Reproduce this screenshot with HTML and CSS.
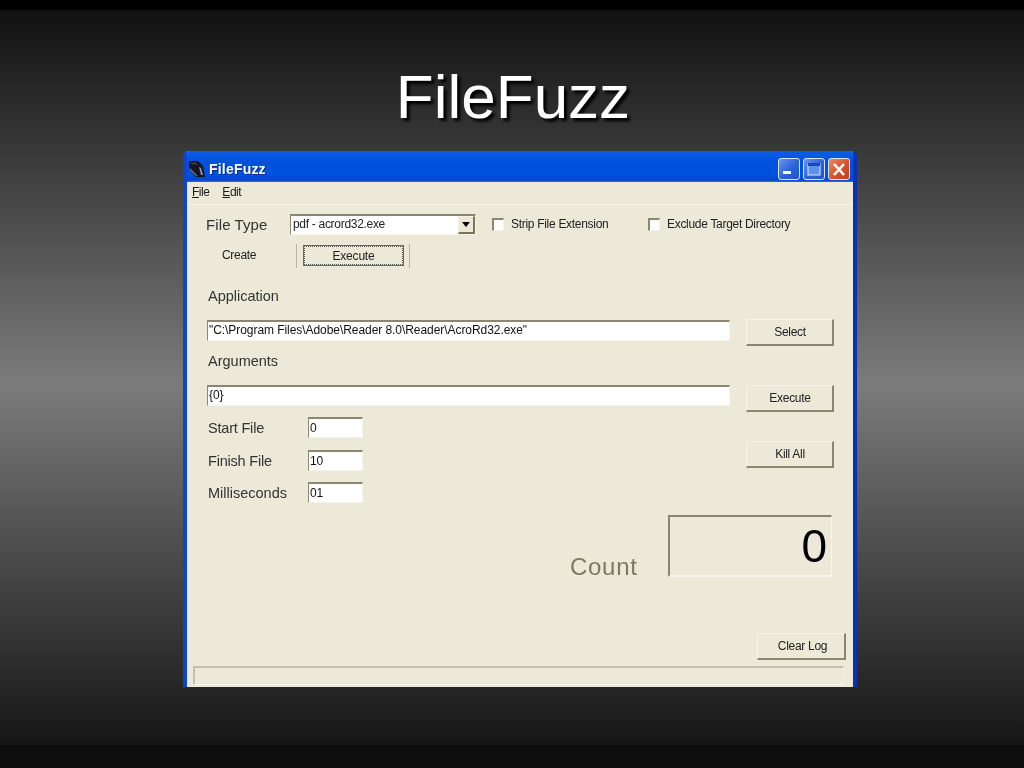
FILE: index.html
```html
<!DOCTYPE html>
<html lang="en">
<head>
<meta charset="utf-8">
<title>FileFuzz</title>
<link rel="stylesheet" href="styles.css">
</head>
<body>
<main class="slide">
  <h1 class="slide-title">FileFuzz</h1>
  <section class="window">
    <header class="titlebar">
      <svg class="app-icon" width="16" height="16" viewBox="0 0 16 16"><path d="M0 0h9l5 5 2 11H7L0 9z" fill="#14161f"/><path d="M1 1h6l2 3H3z" fill="#2c3040"/><path d="M10 6l2 1 2 7h-2z" fill="#8a98b0"/><path d="M0 9l7 6h2L1 7z" fill="#5c6880"/></svg>
      <span class="title-text">FileFuzz</span>
      <div class="caption-buttons">
        <span class="cap cap-blue"><svg width="22" height="22" viewBox="0 0 22 22"><rect x="5" y="13" width="8" height="3" fill="#fff"/></svg></span>
        <span class="cap cap-blue"><svg width="22" height="22" viewBox="0 0 22 22"><rect x="5" y="6" width="12" height="11" fill="#5a90f0" stroke="#e8f0ff" stroke-width="1"/><rect x="5" y="5" width="12" height="3" fill="#1c48b8"/></svg></span>
        <span class="cap cap-red"><svg width="22" height="22" viewBox="0 0 22 22"><path d="M6 6l10 11M16 6 6 17" stroke="#fff" stroke-width="2.6" fill="none"/></svg></span>
      </div>
    </header>
    <nav class="menubar"><span class="menu-item"><u>F</u>ile</span><span class="menu-item"><u>E</u>dit</span></nav>
    <div class="content">
      <div class="row-type">
        <span class="label label-type">File Type</span>
        <div class="select"><span class="select-value">pdf - acrord32.exe</span><span class="select-arrow"></span></div>
        <label class="check check-strip"><span class="check-box"></span><span class="small">Strip File Extension</span></label>
        <label class="check"><span class="check-box"></span><span class="small">Exclude Target Directory</span></label>
      </div>
      <div class="row-create">
        <span class="small create-label">Create</span>
        <div class="tab-strip"><button class="btn-focus" type="button"><span class="focus-ring">Execute</span></button></div>
      </div>
      <div class="main-grid">
        <div class="col-fields">
          <div class="label field-title">Application</div>
          <div class="text-input wide">"C:\Program Files\Adobe\Reader 8.0\Reader\AcroRd32.exe"</div>
          <div class="label field-title title-args">Arguments</div>
          <div class="text-input wide">{0}</div>
          <div class="num-row first"><span class="label num-label tight">Start File</span><div class="text-input num">0</div></div>
          <div class="num-row"><span class="label num-label tight">Finish File</span><div class="text-input num">10</div></div>
          <div class="num-row last"><span class="label num-label">Milliseconds</span><div class="text-input num">01</div></div>
        </div>
        <div class="col-buttons">
          <button class="btn btn-select" type="button">Select</button>
          <button class="btn btn-exec" type="button">Execute</button>
          <button class="btn btn-kill" type="button">Kill All</button>
        </div>
      </div>
      <div class="count-row">
        <span class="count-label">Count</span>
        <div class="count-box">0</div>
      </div>
      <div class="clear-row"><button class="btn btn-clear" type="button">Clear Log</button></div>
      <div class="statusbar"></div>
    </div>
  </section>
</main>
</body>
</html>
```
FILE: styles.css
```css
* { box-sizing: border-box; }
html, body { margin: 0; padding: 0; }
body { width: 1024px; height: 768px; overflow: hidden; background: #000; }
.slide {
  width: 1024px; height: 768px; padding-top: 10px;
  display: flex; flex-direction: column; align-items: center;
  background: linear-gradient(#000 0, #000 10px, #111 10px, #7b7b7b 384px, #161616 745px, #0e0e0e 745px, #0e0e0e 768px);
  font-family: "Liberation Sans", Arial, sans-serif;
}
.slide-title {
  margin: 49px 0 0 2px; height: 92px; font-size: 62px; line-height: 76px; font-weight: 400; color: #fff;
  text-shadow: 3px 3px 3px #000;
}
.window {
  width: 674px; height: 536px; margin-left: 16px; display: flex; flex-direction: column;
  background: #ece9d8; border-radius: 5px 5px 0 0; overflow: hidden;
  border-left: 4px solid #0c46d0; border-right: 4px solid #0832b0;
  filter: blur(.35px);
}
.titlebar {
  height: 31px; flex: none; margin: 0 -4px; padding: 4px 7px 0 6px; display: flex; align-items: center;
  background: linear-gradient(#0a5ce6 0, #0a5ae2 4px, #0050dc 12px, #0052e0 24px, #0a46c8 29px, #2a6ce8 31px);
}
.app-icon { flex: none; margin-right: 4px; }
.title-text { color: #fff; font: 700 14px "Liberation Sans", Arial, sans-serif; letter-spacing: .2px; text-shadow: 1px 1px 0 #0a2a90; }
.caption-buttons { margin-left: auto; display: flex; gap: 3px; }
.cap { width: 22px; height: 22px; border: 1px solid #d8e4f8; border-radius: 3px; display: block; overflow: hidden; }
.cap svg { display: block; margin: -1px; }
.cap-blue { background: linear-gradient(135deg, #6a98f0, #2c60dc 55%, #2450c8); }
.cap-red { background: linear-gradient(135deg, #ec8a66, #d8502c 55%, #c03c1c); }
.menubar {
  height: 23px; flex: none; display: flex; gap: 13px; align-items: center; padding: 0 0 2px 5px;
  border-bottom: 1px solid #f8f6ec;
  font-size: 12px; letter-spacing: -.5px; color: #1a1a1a;
}
.content { flex: 1; display: flex; flex-direction: column; padding: 9px 0 0; min-height: 0; color: #222; }
.label { font-size: 14.5px; color: #333; }
.small { font-size: 12px; letter-spacing: -.3px; color: #222; }
.row-type { height: 21px; display: flex; align-items: center; padding-left: 19px; }
.label-type { width: 84px; font-size: 15px; letter-spacing: .1px; }
.select {
  width: 186px; height: 21px; flex: none; background: #fff; display: flex; align-items: center; justify-content: space-between;
  border-top: 2px solid #8a8672; border-left: 1px solid #8a8672; border-bottom: 1px solid #f6f4ea; border-right: 1px solid #f6f4ea;
  font-size: 12px; letter-spacing: -.3px; padding-left: 2px;
}
.select-value { margin-bottom: 2px; }
.select-arrow {
  width: 17px; height: 18px; background: #ece9d8; position: relative; flex: none;
  border-right: 2px solid #77735f; border-bottom: 2px solid #77735f;
  border-top: 1px solid #f4f2e8; border-left: 1px solid #f4f2e8;
}
.select-arrow::after {
  content: ""; position: absolute; left: 3px; top: 5px;
  border: 4px solid transparent; border-top: 5px solid #000; border-bottom: 0;
}
.check { display: flex; align-items: center; gap: 7px; }
.check .small { margin-bottom: 2px; }
.check-strip { width: 156px; margin-left: 16px; }
.check-box {
  width: 12px; height: 13px; flex: none; background: #fdfdfb;
  border-top: 2px solid #8a8672; border-left: 2px solid #8a8672;
  border-right: 1px solid #f4f2e8; border-bottom: 1px solid #f4f2e8;
}
.row-create { height: 25px; margin-top: 9px; display: flex; align-items: center; padding-left: 35px; }
.create-label { width: 74px; margin-bottom: 2px; }
.tab-strip { width: 114px; height: 24px; padding: 1px 5px 0 6px; border-left: 1px solid #b8b5a6; border-right: 1px solid #b8b5a6; }
.btn-focus { display: block; width: 101px; height: 21px; padding: 0; background: #ece9d8; border: 1px solid #6a6a5e; font: 12px "Liberation Sans", Arial, sans-serif; letter-spacing: -.2px; color: #222; }
.focus-ring { display: flex; align-items: center; justify-content: center; height: 100%; border: 1px dotted #555; }
.main-grid { display: flex; gap: 16px; padding-left: 20px; margin-top: 16px; height: 225px; }
.col-fields { width: 523px; flex: none; display: flex; flex-direction: column; }
.field-title { height: 24px; line-height: 22px; padding-left: 1px; }
.title-args { margin-top: 9px; }
.text-input {
  background: #fff; height: 21px; font-size: 12px; letter-spacing: -.06px; line-height: 16px; padding-left: 1px; color: #111;
  border-top: 2px solid #8a8672; border-left: 1px solid #8a8672; border-bottom: 1px solid #f6f4ea; border-right: 1px solid #f6f4ea;
}
.wide { margin-top: 11px; }
.num-row { display: flex; align-items: center; height: 21px; margin-top: 12px; padding-left: 1px; }
.num-row.first { margin-top: 11px; }
.num-row.last { margin-top: 11px; }
.num-label { width: 100px; padding-top: 2px; }
.tight { letter-spacing: -.2px; }
.num { width: 55px; line-height: 18px; }
.col-buttons { width: 88px; flex: none; display: flex; flex-direction: column; }
.btn {
  display: block; width: 88px; height: 27px; padding: 0 0 0 1px; background: #ece9d8;
  border-top: 1px solid #f6f4ea; border-left: 1px solid #f6f4ea; border-right: 2px solid #8a8672; border-bottom: 2px solid #8a8672;
  font: 12px "Liberation Sans", Arial, sans-serif; letter-spacing: -.3px; color: #222;
}
.btn-select { margin-top: 34px; }
.btn-exec { margin-top: 39px; }
.btn-kill { margin-top: 29px; }
.count-row { display: flex; align-items: flex-end; height: 62px; margin-top: 6px; padding-left: 383px; }
.count-label { width: 98px; font-size: 24px; line-height: 24px; letter-spacing: .7px; color: #7b7a60; margin-bottom: -2px; }
.count-box {
  width: 164px; height: 62px; text-align: right; padding-right: 4px; font-size: 46px; line-height: 58px; color: #000;
  border-top: 2px solid #8a8672; border-left: 2px solid #8a8672; border-bottom: 2px solid #f8f6ec; border-right: 1px solid #f8f6ec;
}
.clear-row { display: flex; justify-content: flex-end; margin-top: 56px; padding-right: 7px; }
.btn-clear { width: 89px; padding-left: 3px; }
.statusbar { height: 19px; margin: 6px 9px 2px 6px; border-top: 2px solid #c4c1ae; border-left: 2px solid #c4c1ae; border-right: 1px solid #f4f2e8; border-bottom: 1px solid #f8f6ec; }
```
